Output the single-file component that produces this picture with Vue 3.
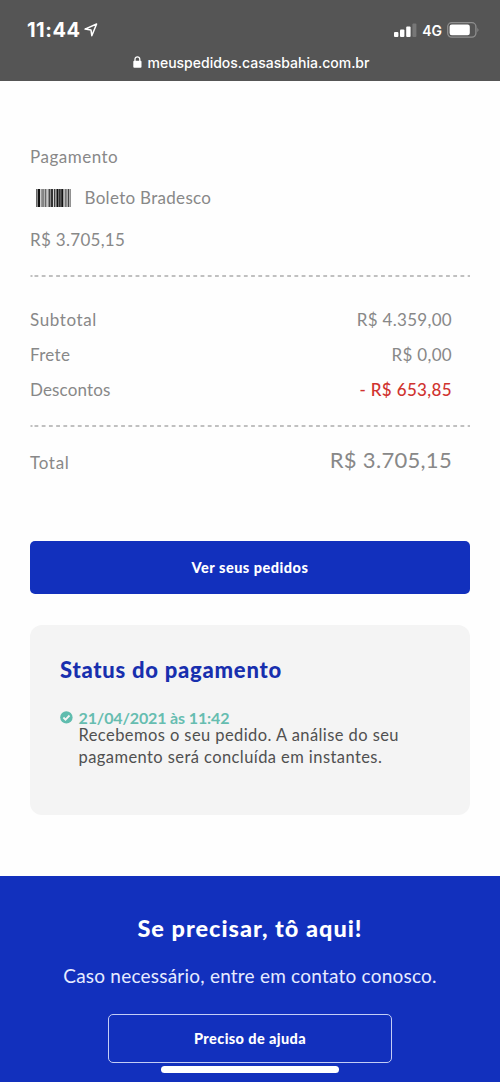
<script setup>
const totals = [
  { label: 'Subtotal', value: 'R$ 4.359,00', cls: 'sub' },
  { label: 'Frete', value: 'R$ 0,00', cls: 'freight' },
  { label: 'Descontos', value: '- R$ 653,85', cls: 'discount' },
]
// [x, width, fill]
const bars = [
  [0, 1.2, '#666'], [1.6, 2.6, '#111'], [5.4, 1.3, '#555'], [7.1, 1.3, '#777'], [8.8, 1.2, '#666'],
  [10.4, 1, '#777'], [12.4, 2.2, '#444'], [15, 2.2, '#333'], [18.2, 1.2, '#111'],
  [20.4, 2.2, '#111'], [23, 1.8, '#333'], [25.2, 2.2, '#111'], [28.6, 1.2, '#555'],
  [30.2, 1.2, '#777'], [31.8, 1.2, '#444'], [33.4, 1.4, '#777'],
]
</script>

<template>
  <div class="page">
    <header class="top">
      <div class="status">
        <span class="time">11:44</span>
        <svg class="loc" width="14" height="14" viewBox="0 0 14 14"><path d="M1 6.1 12.6 1 7.8 12.7 7 7z" fill="none" stroke="#fff" stroke-width="1.5" stroke-linejoin="round" /></svg>
        <svg class="signal" width="23" height="15" viewBox="0 0 23 15">
          <rect x="0" y="9" width="4.4" height="5" rx="1" fill="#fff" />
          <rect x="6" y="6.5" width="4.4" height="7.5" rx="1" fill="#fff" />
          <rect x="12.2" y="3.5" width="4.4" height="10.5" rx="1" fill="#fff" />
          <rect x="18.4" y="0.5" width="4" height="13.5" rx="1" fill="#777" />
        </svg>
        <span class="net">4G</span>
        <svg class="battery" width="33" height="16" viewBox="0 0 33 16">
          <rect x=".7" y=".7" width="28.2" height="14.4" rx="4" fill="none" stroke="#8f8f8f" stroke-width="1.3" />
          <rect x="2.6" y="2.5" width="20.2" height="10.8" rx="2.2" fill="#fff" />
          <path d="M30.5 5.6q1.8 2.3 0 4.6z" fill="#999" />
        </svg>
      </div>
      <div class="url">
        <svg width="9" height="12" viewBox="0 0 9 12"><rect x=".3" y="4.8" width="8.2" height="7" rx="1" fill="#fff" /><path d="M2 5V3.2a2.4 2.4 0 0 1 4.8 0V5" fill="none" stroke="#fff" stroke-width="1.3" /></svg>
        <span>meuspedidos.casasbahia.com.br</span>
      </div>
    </header>

    <main>
      <div class="row pay"><span>Pagamento</span></div>
      <div class="row method">
        <svg width="35" height="18" viewBox="0 0 35 18"><rect v-for="b in bars" :key="b[0]" :x="b[0]" y="0" :width="b[1]" height="18" :fill="b[2]" /></svg>
        <span>Boleto Bradesco</span>
      </div>
      <div class="row paid"><span>R$ 3.705,15</span></div>
      <svg class="dash d1" width="440" height="2"><path d="M.5 1h2M4.5 1H440" stroke="#c0c0c0" stroke-width="2" stroke-dasharray="3.8 3.42" /></svg>
      <div v-for="t in totals" :key="t.label" class="row line" :class="t.cls">
        <span class="label">{{ t.label }}</span><span class="value">{{ t.value }}</span>
      </div>
      <svg class="dash d2" width="440" height="2"><path d="M.5 1h2M4.5 1H440" stroke="#c0c0c0" stroke-width="2" stroke-dasharray="3.8 3.42" /></svg>
      <div class="row total"><span class="label">Total</span><span class="sum">R$ 3.705,15</span></div>
      <button class="orders"><span>Ver seus pedidos</span></button>
      <section class="card">
        <h2><span>Status do pagamento</span></h2>
        <div class="event">
          <svg width="13" height="13" viewBox="0 0 13 13"><circle cx="6.4" cy="6.4" r="6.2" fill="#5fbcae" /><path d="m3.4 6.5 2.1 2.1 4-4.1" fill="none" stroke="#f4f4f4" stroke-width="1.8" /></svg>
          <div>
            <div class="date"><span>21/04/2021 às 11:42</span></div>
            <p><span class="p1">Recebemos o seu pedido. A análise do seu</span><br><span class="p2">pagamento será concluída em instantes.</span></p>
          </div>
        </div>
      </section>
    </main>

    <footer>
      <h2><span>Se precisar, tô aqui!</span></h2>
      <p><span>Caso necessário, entre em contato conosco.</span></p>
      <button class="help"><span>Preciso de ajuda</span></button>
      <div class="home"></div>
    </footer>
  </div>
</template>

<style>
body { margin: 0; background: #fefefe; }
</style>
<style scoped>
.page { width: 500px; height: 1082px; overflow: hidden; display: flex; flex-direction: column; font-family: Lato, "Open Sans", sans-serif; background: #fefefe; white-space: nowrap; }
svg { display: block; flex: none; }
h2, p { margin: 0; }
.top { height: 81px; flex: none; background: #555; color: #fff; font-family: Inter, sans-serif; box-sizing: border-box; padding-top: 18px; }
.status { display: flex; align-items: center; height: 24px; padding: 0 20px 0 27px; }
.time { width: 53px; font-size: 20px; font-weight: 700; line-height: 24px; letter-spacing: .5px; }
.loc { margin-left: 4px; }
.signal { margin-left: auto; }
.net { font-size: 14px; font-weight: 600; margin: 1px 5px 0 5px; }
.battery { width: 33px; }
.url { display: flex; align-items: center; height: 20px; margin-top: 10px; padding-left: 132.5px; gap: 6px; font-size: 14px; font-weight: 500; }
main { height: 795px; flex: none; padding: 0 30px; box-sizing: border-box; }
.row { display: flex; align-items: center; height: 24px; line-height: 24px; font-size: 17px; color: #888; letter-spacing: .3px; }
.pay { margin-top: 64px; letter-spacing: .5px; }
.method { margin-top: 17px; padding-left: 6px; gap: 13.5px; }
.paid { margin-top: 18px; }
.dash { margin-top: 23px; }
.line, .total { justify-content: space-between; padding-right: 18px; }
.sub { margin-top: 31px; }
.sub .label { letter-spacing: .6px; }
.freight, .discount { margin-top: 11px; }
.discount .label { letter-spacing: .15px; }
.discount .value { color: #d0332f; font-weight: 500; letter-spacing: .35px; }
.d2 { margin-top: 23px; }
.total { margin-top: 24px; }
.total .label { letter-spacing: .7px; }
.sum { font-size: 22px; margin-top: -6px; }
.orders { display: flex; align-items: center; justify-content: center; width: 440px; height: 53px; margin-top: 66px; border: 0; border-radius: 5px; background: #1230bd; color: #fff; font: 900 14.5px Lato, sans-serif; letter-spacing: .5px; }
.card { height: 190px; margin-top: 31px; box-sizing: border-box; padding: 31px 30px 0; border-radius: 12px; background: #f4f4f4; }
.card h2 { height: 28px; line-height: 28px; font-size: 22px; font-weight: 900; letter-spacing: .75px; color: #182fae; }
.event { display: flex; gap: 5.5px; margin-top: 25px; }
.event svg { margin-top: 2px; }
.date { height: 17px; line-height: 17px; font-size: 16px; font-weight: 700; letter-spacing: -.13px; color: #66bdb0; }
.event p { line-height: 22px; font-size: 16.5px; letter-spacing: .42px; color: #505050; margin-top: -2px; }
footer { height: 206px; flex: none; background: #1230bd; color: #fff; display: flex; flex-direction: column; align-items: center; }
footer h2 { height: 30px; line-height: 30px; font-size: 23.5px; font-weight: 900; letter-spacing: 1px; margin-top: 37px; }
footer p { height: 24px; line-height: 24px; font-size: 19px; letter-spacing: .22px; margin-top: 21px; color: #e6ebff; }
.help { width: 284px; height: 49px; flex: none; margin-top: 26px; box-sizing: border-box; border: 1.5px solid #c4cdf5; border-radius: 5px; background: none; color: #fff; font: 900 14.5px Lato, sans-serif; letter-spacing: .4px; }
.home { width: 178px; height: 7px; flex: none; border-radius: 4px; background: #fff; margin-top: 3px; }
</style>
